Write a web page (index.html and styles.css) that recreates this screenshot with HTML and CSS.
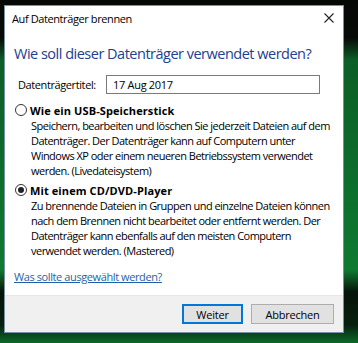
FILE: index.html
```html
<!DOCTYPE html>
<html lang="de">
<head>
    <meta charset="UTF-8">
    <title>Auf Datenträger brennen</title>
    <link rel="stylesheet" href="styles.css">
</head>
<body>

    <div class="dialog">
        <div class="titlebar">
            <span class="title">Auf Datenträger brennen</span>
            <svg class="close" width="10" height="10" viewBox="0 0 10 10">
                <path d="M0.5 0.5 L9.5 9.5 M9.5 0.5 L0.5 9.5" stroke="#222" stroke-width="1.1" fill="none"/>
            </svg>
        </div>

        <div class="content">
            <h1 class="instruction">Wie soll dieser Datenträger verwendet werden?</h1>

            <div class="title-row">
                <label for="disc-title">Datenträgertitel:</label>
                <input id="disc-title" type="text" value="17 Aug 2017">
            </div>

            <div class="option">
                <div class="option-head">
                    <span class="radio"></span>
                    <span class="option-name">Wie ein USB-Speicherstick</span>
                </div>
                <p class="option-text">
                    Speichern, bearbeiten und löschen Sie jederzeit Dateien auf dem<br>
                    Datenträger. Der Datenträger kann auf Computern unter<br>
                    Windows XP oder einem neueren Betriebssystem verwendet<br>
                    werden. (Livedateisystem)
                </p>
            </div>

            <div class="option">
                <div class="option-head">
                    <span class="radio checked"></span>
                    <span class="option-name">Mit einem CD/DVD-Player</span>
                </div>
                <p class="option-text">
                    Zu brennende Dateien in Gruppen und einzelne Dateien können<br>
                    nach dem Brennen nicht bearbeitet oder entfernt werden. Der<br>
                    Datenträger kann ebenfalls auf den meisten Computern<br>
                    verwendet werden. (Mastered)
                </p>
            </div>

            <a class="help" href="#">Was sollte ausgewählt werden?</a>
        </div>

        <div class="footer">
            <button class="btn default">Weiter</button>
            <button class="btn">Abbrechen</button>
        </div>
    </div>

</body>
</html>
```

FILE: styles.css
```css
body {
    margin: 0;
    padding: 5px 0 0 4px;
    height: 343px;
    box-sizing: border-box;
    overflow: hidden;
    font-family: "Open Sans", "Noto Sans", sans-serif;
    font-size: 11px;
    letter-spacing: -0.4px;
    color: #000;
    background: linear-gradient(to bottom, #060806 0, #070a07 38px, #0c5e26 60px, #0e7a31 270px, #061409 292px, #07200e 325px, #0c6a2a 343px);
}

.dialog {
    width: 340px;
    height: 328px;
    box-sizing: border-box;
    border: 1px solid #7a8fa6;
    background-color: #fff;
    display: flex;
    flex-direction: column;
}

.titlebar {
    height: 24px;
    display: flex;
    align-items: center;
    justify-content: space-between;
    padding: 0 9px 0 7px;
}

.content {
    flex: 1;
    padding: 13px 0 0 9px;
}

.instruction {
    margin: 0;
    font-size: 14.5px;
    letter-spacing: -0.5px;
    font-weight: normal;
    line-height: 22px;
    color: #22408f;
}

.title-row {
    display: flex;
    align-items: center;
    margin-top: 10px;
    height: 19px;
}

.title-row label {
    width: 88px;
    padding-left: 4px;
}

.title-row input {
    width: 214px;
    height: 19px;
    box-sizing: border-box;
    border: 1px solid #7a7a7a;
    padding: 0 6px;
    font-family: inherit;
    font-size: 11px;
    letter-spacing: -0.3px;
    color: #000;
}

.option {
    margin-top: 8px;
}

.option + .option {
    margin-top: 4px;
}

.option-head {
    display: flex;
    align-items: center;
    height: 16px;
}

.radio {
    width: 12px;
    height: 12px;
    box-sizing: border-box;
    border: 1px solid #333;
    border-radius: 50%;
    margin: 0 3px 0 1px;
    display: flex;
    align-items: center;
    justify-content: center;
}

.radio.checked::after {
    content: "";
    width: 6px;
    height: 6px;
    border-radius: 50%;
    background-color: #222;
}

.option-name {
    font-weight: bold;
    letter-spacing: 0.1px;
}

.option-text {
    margin: 0 0 0 17px;
    line-height: 15px;
    letter-spacing: -0.52px;
    white-space: nowrap;
}

.help {
    display: inline-block;
    margin-top: 11px;
    line-height: 16px;
    color: #1f5fa8;
}

.footer {
    height: 37px;
    box-sizing: border-box;
    border-top: 1px solid #e6e6e6;
    background-color: #f0f0f0;
    display: flex;
    justify-content: flex-end;
    align-items: flex-start;
    gap: 8px;
    padding: 8px 9px 0 0;
}

.btn {
    height: 20px;
    box-sizing: border-box;
    border: 1px solid #adadad;
    background-color: #e1e1e1;
    font-family: inherit;
    font-size: 11px;
    letter-spacing: -0.2px;
    color: #000;
    padding: 0;
}

.btn.default {
    width: 61px;
    border: 2px solid #0078d7;
}

.btn + .btn {
    width: 83px;
}
```
